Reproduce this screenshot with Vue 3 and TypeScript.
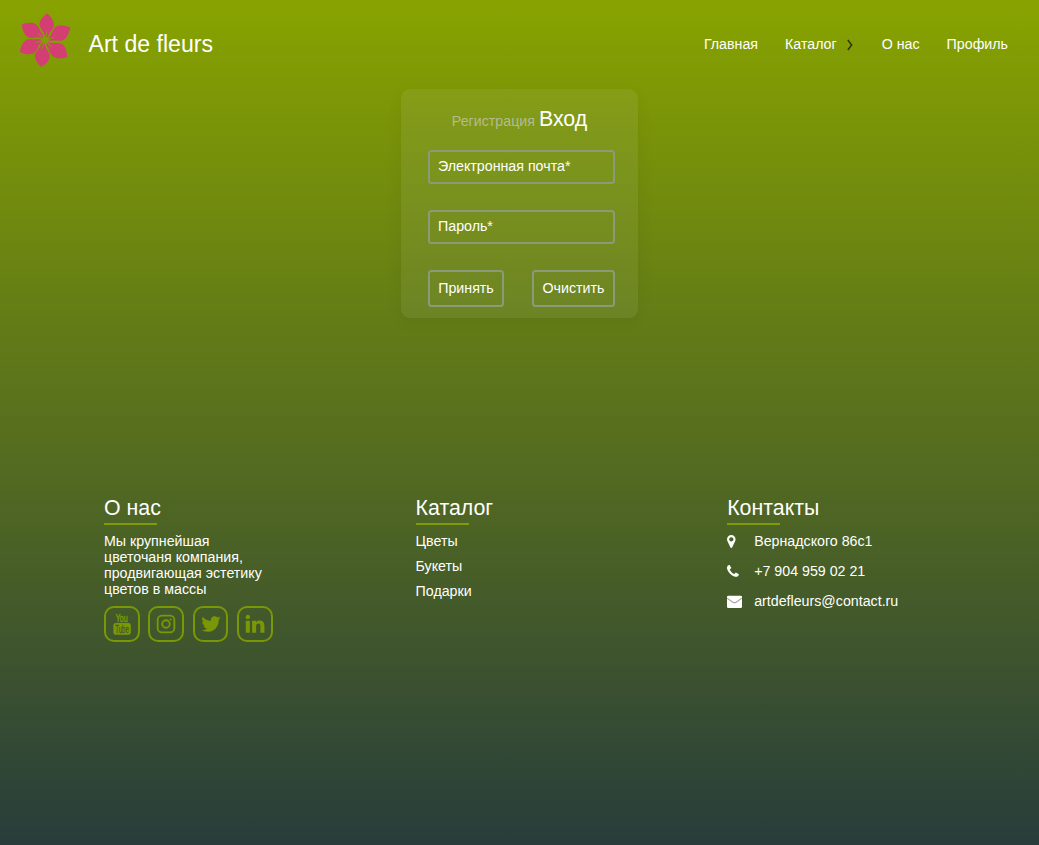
<script setup lang="ts">
interface Contact {
  icon: string
  text: string
  fold?: string
}

interface Petal {
  angle: number
  scale: number
}

const petals: Petal[] = [
  { angle: 1, scale: 1.02 },
  { angle: 60, scale: 1.08 },
  { angle: 124, scale: 1.08 },
  { angle: 184, scale: 1.05 },
  { angle: 241, scale: 1.07 },
  { angle: 300, scale: 1.07 },
]
const catalog: string[] = ['Цветы', 'Букеты', 'Подарки']

const contacts: Contact[] = [
  {
    text: 'Вернадского 86с1',
    icon: 'M768 640q0-106-75-181t-181-75-181 75-75 181 75 181 181 75 181-75 75-181zm256 0q0 109-33 179l-364 774q-16 33-47.500 52t-67.500 19-67.500-19-46.500-52l-365-774q-33-70-33-179 0-212 150-362t362-150 362 150 150 362z',
  },
  {
    text: '+7 904 959 02 21',
    icon: 'M1408 1240q0 27-10 70.500t-21 68.500q-21 50-122 106-94 51-186 51-27 0-53-3.500t-57.500-12.500-47-14.500-55.500-20.500-49-18q-98-35-175-83-127-79-264-216t-216-264q-48-77-83-175-3-9-18-49t-20.500-55.500-14.500-47-12.500-57.500-3.500-53q0-92 51-186 56-101 106-122 25-11 68.500-21t70.500-10q14 0 21 3 18 6 53 76 11 19 30 54t35 63.500 31 53.500q3 4 17.500 25t21.500 35.500 7 28.500q0 20-28.500 50t-62 55-62 53-28.500 46q0 9 5 22.500t8.500 20.500 14 24 11.500 19q76 137 174 235t235 174q2 1 19 11.500t24 14 20.500 8.500 22.500 5q18 0 46-28.500t53-62 55-62 50-28.500q14 0 28.500 7t35.500 21.500 25 17.500q25 15 53.500 31t63.500 35 54 30q70 35 76 53 3 7 3 21z',
  },
  {
    text: 'artdefleurs@contact.ru',
    icon: 'M150 200h1492q150 0 150 150v1180q0 150-150 150h-1492q-150 0-150-150v-1180q0-150 150-150z',
    fold: 'M20 500Q400 790 700 980 896 1100 1092 980 1392 790 1772 500',
  },
]
</script>

<template>
  <div class="page">
    <header class="header">
      <svg class="flower" viewBox="-27 -27 54 54">
        <path
          v-for="petal in petals"
          :key="petal.angle"
          :transform="`rotate(${petal.angle}) scale(${petal.scale})`"
          d="M.2-2.800C-.6-8-5.300-10.700-5.700-15.200-5.600-20-1.500-23.600 1.700-26 5-23.400 8.600-19 8.500-14.800 8.200-11 5-8.500 3.700-5.200 3-3.600 2.200-2.600 1.200-2.200Q2.400-5.500 2-10.500 1.300-6 .2-2.800Z"
        />
      </svg>
      <div class="brand">Art de fleurs</div>
      <nav class="nav">
        <a>Главная</a>
        <a class="with-arrow">Каталог
          <svg class="chevron" viewBox="0 0 6 12"><path d="M.8 1 4.700 6 .8 11" /></svg>
        </a>
        <a>О нас</a>
        <a>Профиль</a>
      </nav>
    </header>

    <form class="card" @submit.prevent>
      <div class="tabs"><span class="tab">Регистрация</span><span class="tab active">Вход</span></div>
      <div class="field">Электронная почта*</div>
      <div class="field">Пароль*</div>
      <div class="actions">
        <button class="accept" type="submit">Принять</button>
        <button class="clear" type="reset">Очистить</button>
      </div>
    </form>

    <footer class="footer">
      <section>
        <h2>О нас</h2>
        <p class="about">Мы крупнейшая<br />цветочаня компания,<br />продвигающая эстетику<br />цветов в массы</p>
        <div class="socials">
          <a class="social">
            <svg viewBox="0 0 24 24">
              <text class="yt" x="5.200" y="9.300" textLength="13" lengthAdjust="spacingAndGlyphs">You</text>
              <rect x="2.600" y="10.800" width="19" height="13" rx="2.600" />
              <text class="yt cut" x="4.600" y="21.500" textLength="14.800" lengthAdjust="spacingAndGlyphs">Tube</text>
            </svg>
          </a>
          <a class="social">
            <svg class="outline" viewBox="0 0 24 24">
              <rect x="2.900" y="2.900" width="18.200" height="18.200" rx="4.600" />
              <circle cx="12" cy="12" r="4.100" />
              <circle class="dot" cx="17" cy="7.100" r="1.200" />
            </svg>
          </a>
          <a class="social">
            <svg viewBox="0 0 1792 1792">
              <path d="M1684 408q-67 98-162 167 1 14 1 42 0 130-38 259.500t-115.500 248.500-184.500 210.500-258 146-323 54.500q-271 0-496-145 35 4 78 4 225 0 401-138-105-2-188-64.500t-114-159.500q33 5 61 5 43 0 85-11-112-23-185.500-111.500t-73.500-205.500v-4q68 38 146 41-66-44-105-115t-39-154q0-88 44-163 121 149 294.500 238.500t371.500 99.500q-8-38-8-74 0-134 94.500-228.500t228.500-94.500q140 0 236 102 109-21 205-78-37 115-142 178 93-10 186-50z" />
            </svg>
          </a>
          <a class="social">
            <svg viewBox="0 0 1792 1792">
              <path d="M477 625v991h-330v-991h330zm21-306q1 73-50.500 122t-135.500 49h-2q-82 0-132-49t-50-122q0-74 51.500-122.500t134.500-48.500 133 48.500 51 122.500zm1166 729v568h-329v-530q0-105-40.500-164.500t-126.500-59.500q-63 0-105.500 34.500t-63.500 85.500q-11 30-11 81v553h-329q2-399 2-647t-1-296l-1-48h329v144h-2q20-32 41-56t56.500-52 87-43.500 114.500-15.500q171 0 275 113.500t104 332.500z" />
            </svg>
          </a>
        </div>
      </section>
      <section>
        <h2>Каталог</h2>
        <ul class="links">
          <li v-for="item in catalog" :key="item">{{ item }}</li>
        </ul>
      </section>
      <section>
        <h2>Контакты</h2>
        <ul class="contacts">
          <li v-for="item in contacts" :key="item.text">
            <svg viewBox="0 0 1792 1792">
              <path :d="item.icon" />
              <path v-if="item.fold" class="fold" :d="item.fold" />
            </svg>
            <span>{{ item.text }}</span>
          </li>
        </ul>
      </section>
    </footer>
  </div>
</template>

<style>
body {
  margin: 0;
}
</style>

<style scoped>
.page {
  box-sizing: border-box;
  width: 100%;
  height: 845px;
  overflow: hidden;
  color: #fff;
  font-family: "Liberation Sans", Arial, sans-serif;
  font-size: 14.220px;
  line-height: 16px;
  background: linear-gradient(#88a300, #283d3b);
}
.header {
  display: flex;
  align-items: center;
  height: 89px;
  padding: 0 31px 2px 17.500px;
  box-sizing: border-box;
}
.flower {
  width: 54px;
  height: 54px;
  margin-top: -7.500px;
  overflow: visible;
  fill: #d43f73;
}
.brand {
  margin-left: 17px;
  font-size: 23.100px;
  line-height: 28px;
}
.nav {
  display: flex;
  gap: 27px;
  margin-left: auto;
}
.with-arrow {
  display: flex;
  align-items: center;
  margin-right: 2px;
}
.chevron {
  width: 6px;
  height: 12px;
  margin: 2px 0 0 10px;
  fill: none;
  stroke: #26320a;
  stroke-width: 1.400;
}
.card {
  box-sizing: border-box;
  width: 237px;
  height: 229px;
  margin: 0 auto;
  padding: 16px 23px 11px 27px;
  border-radius: 9px;
  background: rgba(230, 230, 235, 0.07);
  box-shadow: 0 4px 16px rgba(0, 0, 0, 0.06);
}
.tabs {
  display: flex;
  justify-content: center;
  align-items: baseline;
  gap: 4px;
  height: 44.500px;
  margin: 0 4px 0 0;
  line-height: 28px;
}
.tab {
  color: #b5ba93;
}
.tab.active {
  color: #fff;
  font-size: 21.330px;
}
.field {
  box-sizing: border-box;
  height: 34.400px;
  margin-bottom: 25.700px;
  padding: 6px 8px;
  border: 2px solid #8b9a79;
  border-radius: 3.500px;
  line-height: 16px;
}
.actions {
  display: flex;
  justify-content: space-between;
}
.actions button {
  height: 37px;
  padding: 0;
  border: 2px solid #8b9a79;
  border-radius: 3.500px;
  background: none;
  color: #fff;
  font: inherit;
}
.actions .accept {
  width: 76px;
}
.actions .clear {
  width: 83px;
}
.footer {
  display: grid;
  grid-template-columns: repeat(3, 311.600px);
  margin: 176px 0 0 104px;
}
h2 {
  margin: 0 0 8px;
  font-size: 21.330px;
  font-weight: 400;
  line-height: 28px;
}
h2::after {
  content: "";
  display: block;
  width: 53px;
  height: 2px;
  margin-top: 1px;
  background: #7f9c08;
}
.about {
  margin: 0;
}
.socials {
  display: flex;
  gap: 8.900px;
  margin-top: 9px;
}
.social {
  box-sizing: border-box;
  display: flex;
  align-items: center;
  justify-content: center;
  width: 35.500px;
  height: 35.500px;
  border: 2px solid #7a9806;
  border-radius: 10px;
}
.social svg {
  width: 22px;
  height: 22px;
  overflow: visible;
  fill: #7a9806;
}
.social .outline {
  fill: none;
  stroke: #7a9806;
  stroke-width: 2;
}
.social .dot {
  fill: #7a9806;
  stroke: none;
}
.yt {
  font: 12.500px "Liberation Sans", Arial, sans-serif;
  stroke: #7a9806;
  stroke-width: 0.600;
}
.social .yt.cut {
  fill: #425a2b;
  stroke: #425a2b;
  stroke-width: 0.300;
  font-size: 12px;
}
ul {
  margin: 0;
  padding: 0;
  list-style: none;
}
.links li {
  margin-bottom: 9px;
}
.contacts li {
  display: flex;
  align-items: center;
  margin-bottom: 14.200px;
}
.contacts svg {
  width: 15px;
  height: 15px;
  margin-right: 12px;
  fill: #fff;
}
.contacts .fold {
  fill: none;
  stroke: #a3aa9b;
  stroke-width: 130;
}
</style>
